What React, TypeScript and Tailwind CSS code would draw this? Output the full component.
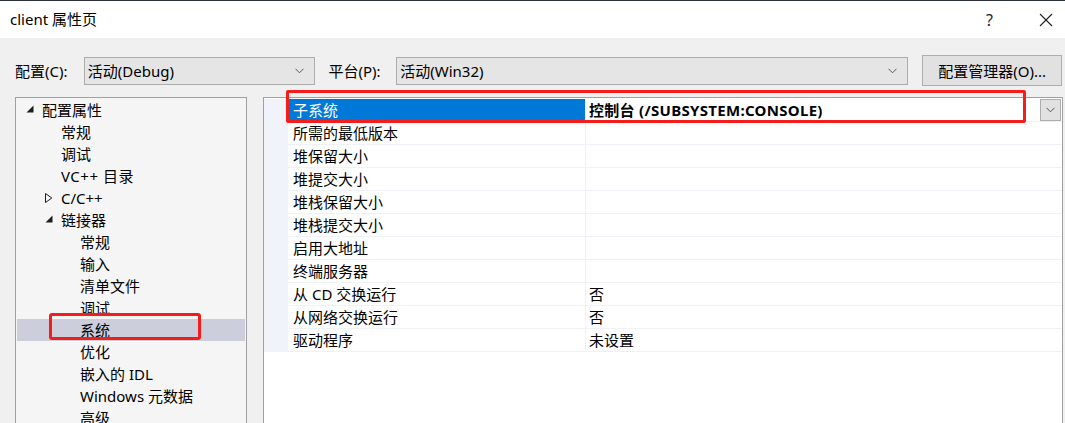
import React from "react";

/* =====================
   DATA
===================== */
type TreeItem = {
  label: string;
  level: 0 | 1 | 2;
  toggle?: "open" | "closed";
  selected?: boolean;
};

const TREE: TreeItem[] = [
  { label: "配置属性", level: 0, toggle: "open" },
  { label: "常规", level: 1 },
  { label: "调试", level: 1 },
  { label: "VC++ 目录", level: 1 },
  { label: "C/C++", level: 1, toggle: "closed" },
  { label: "链接器", level: 1, toggle: "open" },
  { label: "常规", level: 2 },
  { label: "输入", level: 2 },
  { label: "清单文件", level: 2 },
  { label: "调试", level: 2 },
  { label: "系统", level: 2, selected: true },
  { label: "优化", level: 2 },
  { label: "嵌入的 IDL", level: 2 },
  { label: "Windows 元数据", level: 2 },
  { label: "高级", level: 2 },
];

const PROPS: { name: string; value?: string }[] = [
  { name: "子系统", value: "控制台 (/SUBSYSTEM:CONSOLE)" },
  { name: "所需的最低版本" },
  { name: "堆保留大小" },
  { name: "堆提交大小" },
  { name: "堆栈保留大小" },
  { name: "堆栈提交大小" },
  { name: "启用大地址" },
  { name: "终端服务器" },
  { name: "从 CD 交换运行", value: "否" },
  { name: "从网络交换运行", value: "否" },
  { name: "驱动程序", value: "未设置" },
];

const indent = ["pl-[9px]", "pl-[28px]", "pl-[47px]"];

/* =====================
   SMALL PIECES
===================== */
function Chevron() {
  return (
    <svg width="9" height="6" viewBox="0 0 9 6" className="shrink-0">
      <polyline points="0.5,0.8 4.5,4.8 8.5,0.8" fill="none" stroke="#555" strokeWidth="1" />
    </svg>
  );
}

function Combo({ text, className }: { text: string; className: string }) {
  return (
    <div
      className={[
        "h-[28px] flex items-center justify-between pl-[3px] pr-[10px] bg-[#e5e5e5] border border-[#adadad] text-black",
        className,
      ].join(" ")}
    >
      <span>{text}</span>
      <Chevron />
    </div>
  );
}

function Toggle({ kind }: { kind?: "open" | "closed" }) {
  if (kind === "open")
    return (
      <svg width="8" height="8" viewBox="0 0 8 8" className="mt-[-3px]">
        <polygon points="7.5,0.5 7.5,7.5 0.5,7.5" fill="#1e1e1e" />
      </svg>
    );
  if (kind === "closed")
    return (
      <svg width="8" height="10" viewBox="0 0 8 10">
        <polygon points="0.5,0.5 6.8,5 0.5,9.5" fill="none" stroke="#1e1e1e" strokeWidth="1" />
      </svg>
    );
  return null;
}

/* =====================
   APP
===================== */
export default function App() {
  return (
    <div className="relative w-[1065px] h-[423px] overflow-hidden bg-[#f0f0f0] text-[15px] leading-[22px] text-black font-['Noto_Sans','Noto_Sans_CJK_SC',sans-serif]">
      {/* TITLE BAR */}
      <div className="h-[38px] bg-white border-t border-[#2b2e3b] flex items-center pl-[10px]">
        <span className="mt-[-1px]">client 属性页</span>
        <div className="flex-1" />
        <span className="mr-[46px] text-[16px] text-[#222]">?</span>
        <svg width="14" height="14" viewBox="0 0 14 14" className="mr-[12px]">
          <line x1="1" y1="1" x2="13" y2="13" stroke="#222" strokeWidth="1.1" />
          <line x1="13" y1="1" x2="1" y2="13" stroke="#222" strokeWidth="1.1" />
        </svg>
      </div>

      {/* CONFIG ROW */}
      <div className="flex items-center mt-[17px] pl-[15px] pr-[3px]">
        <span className="w-[69px]">配置(C):</span>
        <Combo text="活动(Debug)" className="w-[232px]" />
        <span className="ml-[13px] w-[68px]">平台(P):</span>
        <Combo text="活动(Win32)" className="w-[513px]" />
        <div className="ml-[14px] w-[140px] h-[31px] flex items-center justify-center bg-[#e1e1e1] border border-[#adadad]">
          配置管理器(O)...
        </div>
      </div>

      {/* PANELS */}
      <div className="flex mt-[11px] pl-[15px] h-[400px]">
        {/* TREE */}
        <div className="w-[232px] border border-[#a0a0a0] bg-[#f5f5f5] pt-px">
          {TREE.map((it, i) => (
            <div
              key={i}
              className={[
                "h-[22px] flex items-center mx-px",
                indent[it.level],
                it.selected ? "bg-[#cccedb]" : "",
              ].join(" ")}
            >
              <div className="w-[16px] flex items-center">
                <Toggle kind={it.toggle} />
              </div>
              <span className={it.label.startsWith("VC") ? "tracking-[0.5px]" : ""}>{it.label}</span>
            </div>
          ))}
        </div>

        {/* PROPERTY GRID */}
        <div className="ml-[16px] w-[800px] border border-[#a0a0a0] bg-white pt-[1px]">
          {PROPS.map((p, i) => (
            <div key={i} className="flex h-[23px]">
              <div className="w-[24px] bg-[#f0f4fa]" />
              <div
                className={[
                  "w-[298px] pl-[5px] border-b border-r border-[#eef1f6] flex items-center",
                  i === 0 ? "bg-[#0078d7] text-white" : "",
                ].join(" ")}
              >
                {p.name}
              </div>
              <div className="flex-1 pl-[3px] border-b border-[#eef1f6] flex items-center">
                <span className={i === 0 ? "font-bold tracking-[0.3px]" : ""}>{p.value}</span>
                {i === 0 && (
                  <>
                    <div className="flex-1" />
                    <div className="w-[21px] h-[22px] mr-px bg-[#e1e1e1] border border-[#adadad] flex items-center justify-center">
                      <Chevron />
                    </div>
                  </>
                )}
              </div>
            </div>
          ))}
        </div>
      </div>

      {/* ANNOTATIONS */}
      <div className="absolute left-[49px] top-[313px] w-[152px] h-[27px] border-[3px] border-[#f51c1c] rounded-[3px]" />
      <div className="absolute left-[286px] top-[90px] w-[740px] h-[33px] border-[3px] border-[#f51c1c] rounded-[2px]" />
    </div>
  );
}
